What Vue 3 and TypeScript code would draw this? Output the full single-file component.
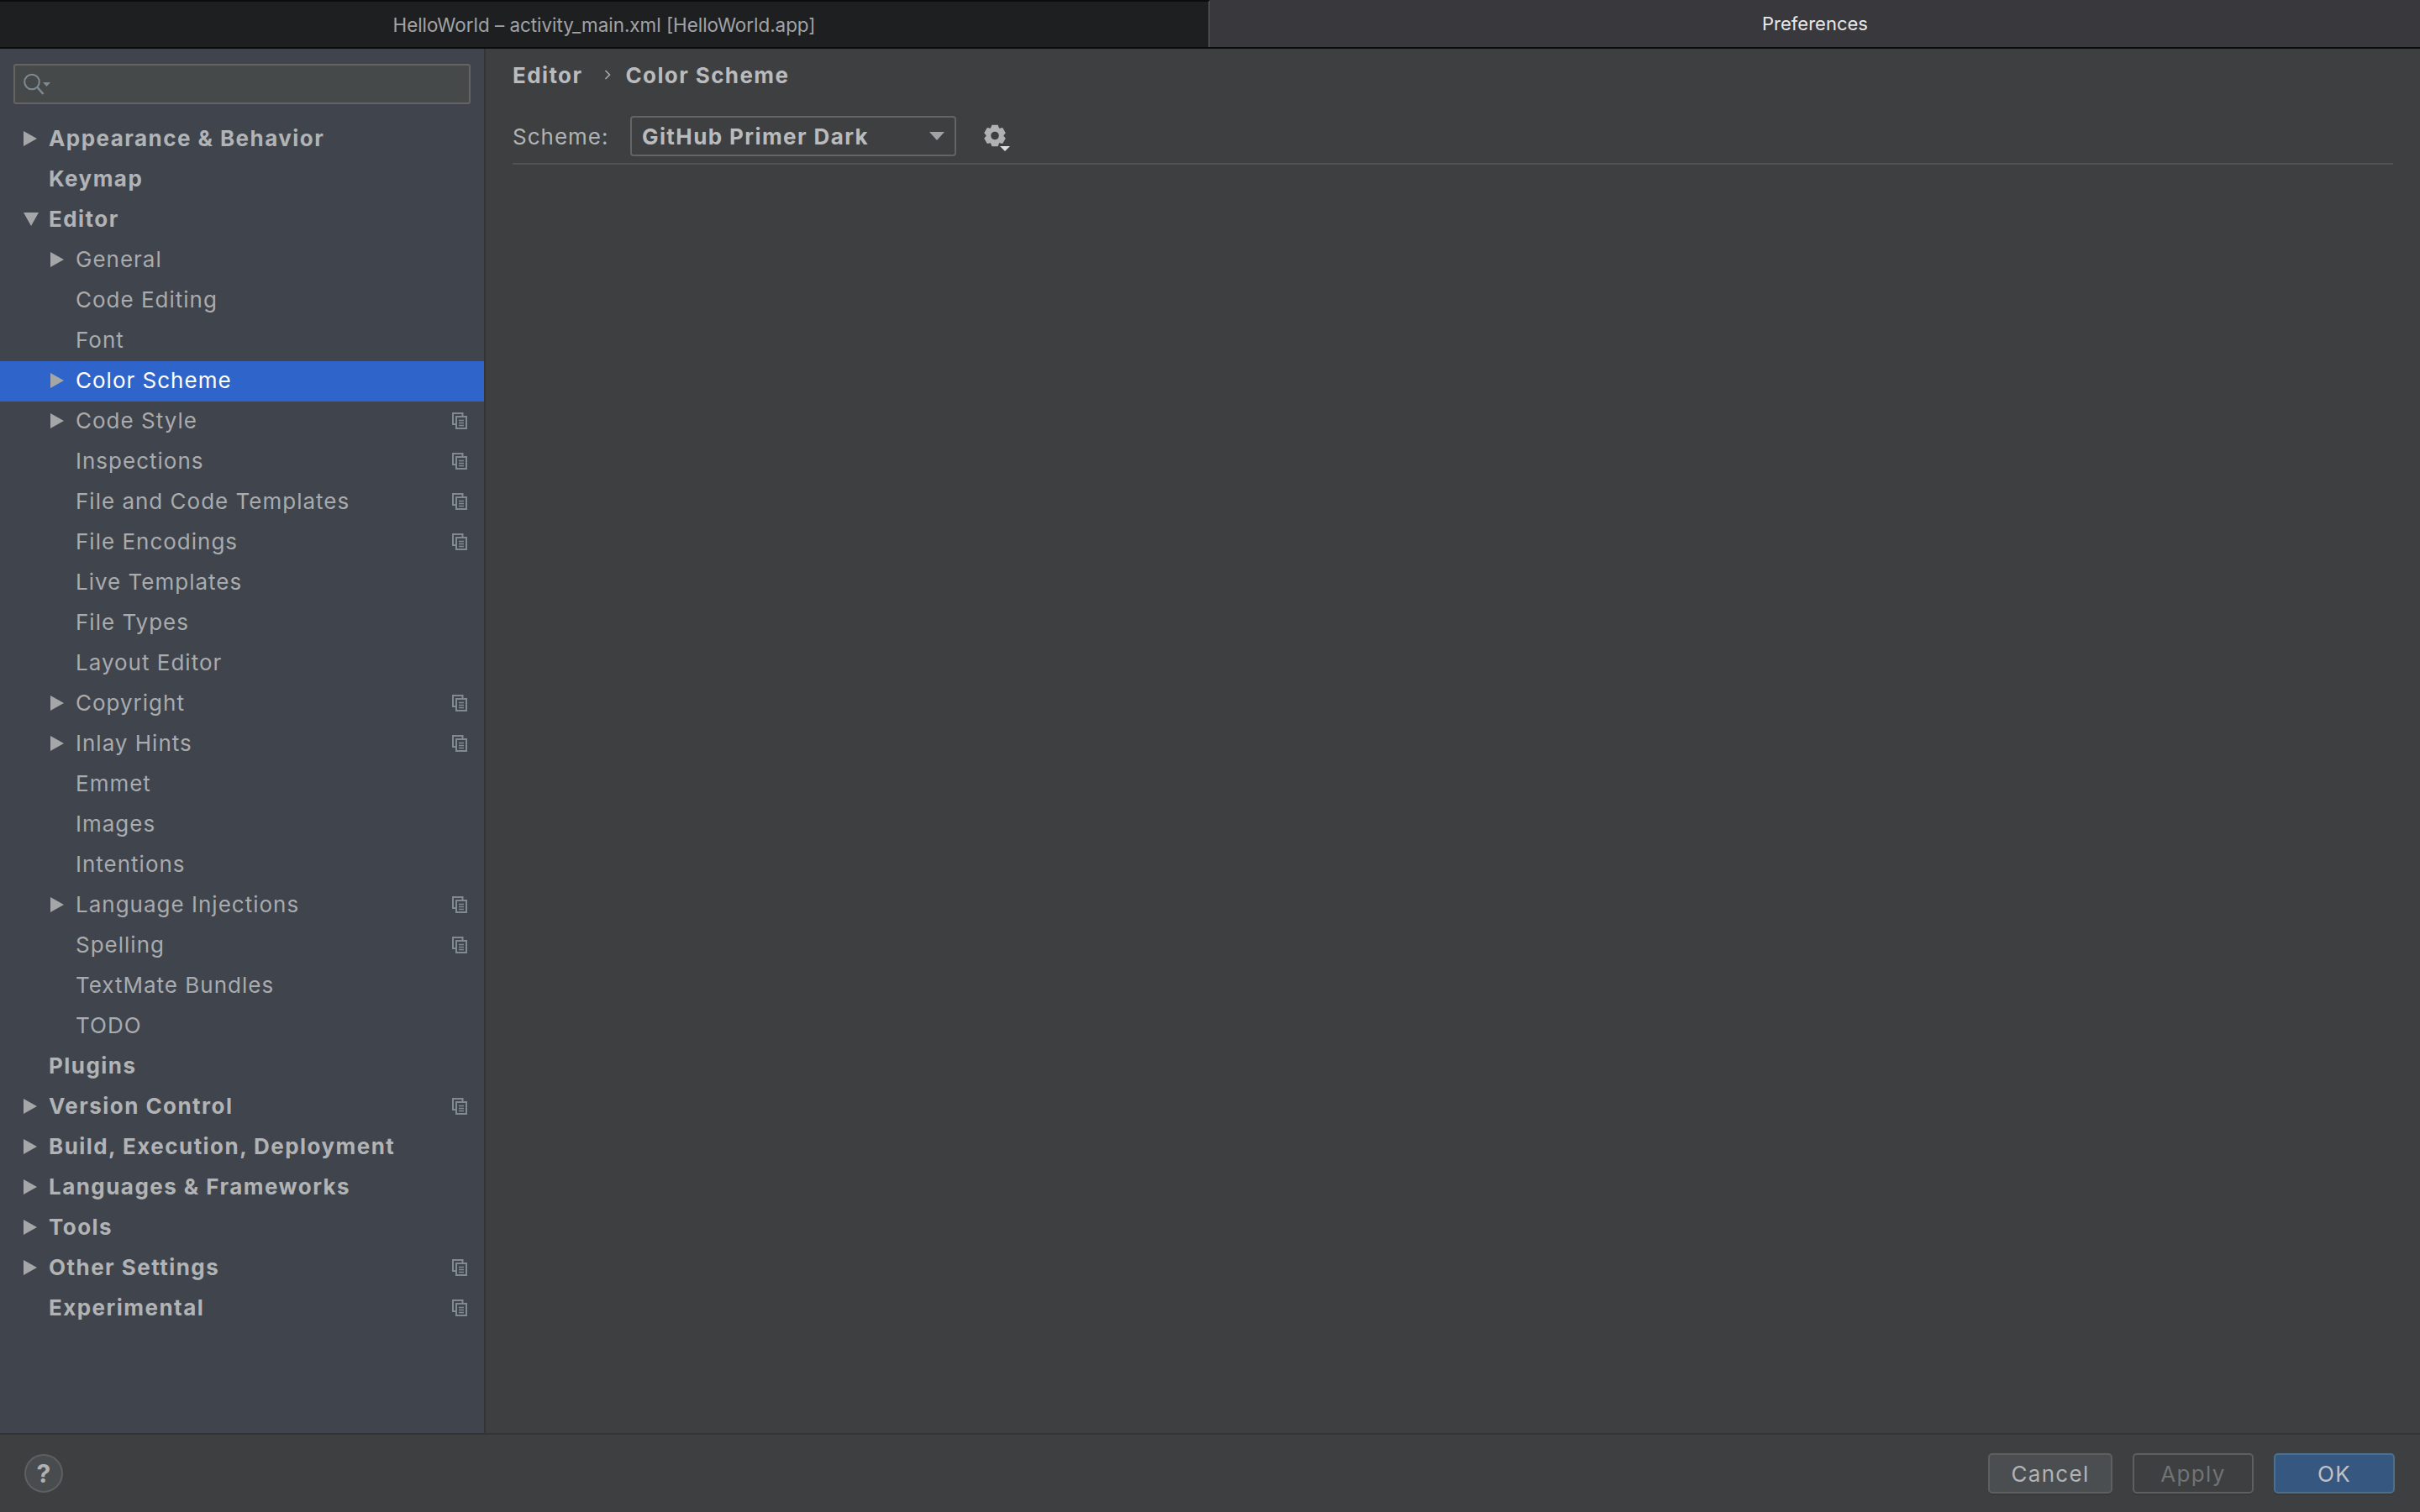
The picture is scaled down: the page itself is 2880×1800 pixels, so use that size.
<script setup lang="ts">
interface TreeRow {
  label: string
  level: 0 | 1
  arrow?: 'right' | 'down'
  copy?: boolean
  selected?: boolean
}

const rows: TreeRow[] = [
  { label: 'Appearance & Behavior', level: 0, arrow: 'right' },
  { label: 'Keymap', level: 0 },
  { label: 'Editor', level: 0, arrow: 'down' },
  { label: 'General', level: 1, arrow: 'right' },
  { label: 'Code Editing', level: 1 },
  { label: 'Font', level: 1 },
  { label: 'Color Scheme', level: 1, arrow: 'right', selected: true },
  { label: 'Code Style', level: 1, arrow: 'right', copy: true },
  { label: 'Inspections', level: 1, copy: true },
  { label: 'File and Code Templates', level: 1, copy: true },
  { label: 'File Encodings', level: 1, copy: true },
  { label: 'Live Templates', level: 1 },
  { label: 'File Types', level: 1 },
  { label: 'Layout Editor', level: 1 },
  { label: 'Copyright', level: 1, arrow: 'right', copy: true },
  { label: 'Inlay Hints', level: 1, arrow: 'right', copy: true },
  { label: 'Emmet', level: 1 },
  { label: 'Images', level: 1 },
  { label: 'Intentions', level: 1 },
  { label: 'Language Injections', level: 1, arrow: 'right', copy: true },
  { label: 'Spelling', level: 1, copy: true },
  { label: 'TextMate Bundles', level: 1 },
  { label: 'TODO', level: 1 },
  { label: 'Plugins', level: 0 },
  { label: 'Version Control', level: 0, arrow: 'right', copy: true },
  { label: 'Build, Execution, Deployment', level: 0, arrow: 'right' },
  { label: 'Languages & Frameworks', level: 0, arrow: 'right' },
  { label: 'Tools', level: 0, arrow: 'right' },
  { label: 'Other Settings', level: 0, arrow: 'right', copy: true },
  { label: 'Experimental', level: 0, copy: true }
]

// Six-toothed settings gear, centred on 0,0
const gearPath =
  [0, 60, 120, 180, 240, 300]
    .flatMap((tooth) => [
      [tooth - 30, 10.2],
      [tooth - 16, 13.2],
      [tooth + 16, 13.2],
      [tooth + 30, 10.2]
    ])
    .map(([deg, r], i) => {
      const rad = (deg * Math.PI) / 180
      const x = (r * Math.sin(rad)).toFixed(2)
      const y = (-r * Math.cos(rad)).toFixed(2)
      return `${i === 0 ? 'M' : 'L'}${x} ${y}`
    })
    .join('') + 'zM0 -4.800a4.800 4.800 0 1 0 0 9.600a4.800 4.800 0 1 0 0 -9.600z'
</script>

<template>
  <div class="window">
    <header class="tabs">
      <div class="tab">HelloWorld – activity_main.xml [HelloWorld.app]</div>
      <div class="tab active">Preferences</div>
    </header>

    <div class="body">
      <aside class="sidebar">
        <div class="search">
          <svg class="search-icon" width="32" height="28" viewBox="0 0 32 28">
            <circle cx="10" cy="11.5" r="8.800" fill="none" stroke="#7f8b91" stroke-width="2" />
            <path d="M16.500 18l7 8" stroke="#7f8b91" stroke-width="2.600" fill="none" />
            <path d="M23 12h9l-4.500 5z" fill="#7f8b91" />
          </svg>
        </div>

        <ul class="tree">
          <li
            v-for="row in rows"
            :key="row.label"
            class="row"
            :class="[`level-${row.level}`, { selected: row.selected }]"
          >
            <span class="arrow-slot">
              <svg v-if="row.arrow === 'right'" width="16" height="18" viewBox="0 0 16 18">
                <path d="M0 0l16 9L0 18z" fill="#a4a6a8" />
              </svg>
              <svg v-else-if="row.arrow === 'down'" width="18" height="16" viewBox="0 0 18 16">
                <path d="M0 0h18l-9 16z" fill="#a4a6a8" />
              </svg>
            </span>
            <span class="label">{{ row.label }}</span>
            <svg v-if="row.copy" class="copy" width="18" height="20" viewBox="0 0 18 20">
              <path d="M12.500 4V1H1v13h3.500" fill="none" stroke="#7f8b91" stroke-width="2" />
              <path d="M5 5h12v14H5z" fill="none" stroke="#7f8b91" stroke-width="2" />
              <path d="M8 9.500h6M8 12.500h6M8 15.500h6" stroke="#7f8b91" stroke-width="1.600" />
            </svg>
          </li>
        </ul>
      </aside>

      <main class="content">
        <div class="breadcrumb">
          <span>Editor</span>
          <svg class="crumb-sep" width="10" height="14" viewBox="0 0 10 14">
            <path d="M2.500 2l5 5-5 5" fill="none" stroke="#a9a9a9" stroke-width="1.600" />
          </svg>
          <span>Color Scheme</span>
        </div>

        <div class="scheme">
          <span class="scheme-label">Scheme:</span>
          <div class="combo">
            <span>GitHub Primer Dark</span>
            <svg width="18" height="10" viewBox="0 0 18 10"><path d="M0 0h18l-9 10z" fill="#a0a3a5" /></svg>
          </div>
          <svg class="gear" width="34" height="36" viewBox="0 0 34 36">
            <path transform="translate(14 17.500)" fill="#afb1b3" fill-rule="evenodd" :d="gearPath" />
            <path d="M20 30h12l-6 6z" fill="#dcdee0" />
          </svg>
        </div>
      </main>
    </div>

    <footer class="footer">
      <div class="help">?</div>
      <div class="actions">
        <button class="btn cancel">Cancel</button>
        <button class="btn apply">Apply</button>
        <button class="btn ok">OK</button>
      </div>
    </footer>
  </div>
</template>

<style>
html,
body {
  margin: 0;
  background: #3c3f41;
}
</style>

<style scoped>
.window {
  width: 2880px;
  height: 1800px;
  display: flex;
  flex-direction: column;
  background: #3d3f41;
  color: #b1b3b5;
  font-family: Inter, 'Liberation Sans', sans-serif;
  font-size: 26px;
  letter-spacing: 1px;
  overflow: hidden;
}

/* Tab strip */
.tabs {
  height: 58px;
  flex: none;
  display: grid;
  grid-template-columns: 1440px 1fr;
  box-sizing: border-box;
  border-bottom: 2px solid #0c0c0d;
  font-size: 22.4px;
  letter-spacing: 0;
}

.tab {
  display: flex;
  align-items: center;
  justify-content: center;
  background: #1e1f21;
  border-top: 2px solid #0c0c0d;
  border-right: 2px solid #4a4a4c;
  color: #a2a3a5;
}

.tab.active {
  background: #39393d;
  border: 0;
  color: #e8e8e9;
  font-size: 22px;
}

/* Main area */
.body {
  flex: 1;
  min-height: 0;
  display: flex;
}

.sidebar {
  width: 578px;
  flex: none;
  box-sizing: border-box;
  padding: 18px 0 0;
  background: #3f444d;
  border-right: 2px solid #323436;
}

.search {
  width: 544px;
  height: 48px;
  margin-left: 16px;
  box-sizing: border-box;
  display: flex;
  align-items: center;
  padding-left: 10px;
  background: #45494a;
  border: 2px solid #646464;
  border-radius: 3px;
}

.tree {
  list-style: none;
  margin: 18px 0 0;
  padding: 0;
}

.row {
  height: 48px;
  display: flex;
  align-items: center;
  box-sizing: border-box;
  padding-bottom: 2px;
}

.arrow-slot {
  width: 30px;
  flex: none;
  display: flex;
  align-items: center;
}

.level-0 {
  padding-left: 28px;
  font-weight: 700;
  letter-spacing: 1.45px;
}

.level-1 {
  padding-left: 60px;
  color: #a9abad;
}

.selected {
  background: #2f65ca;
  color: #fff;
}

.label {
  flex: 1;
  padding-bottom: 1px;
}

.copy {
  margin-right: 20px;
  flex: none;
}

/* Right pane */
.content {
  flex: 1;
  padding: 0 32px;
}

.breadcrumb {
  height: 62px;
  display: flex;
  align-items: center;
  gap: 18px;
  font-weight: 700;
  letter-spacing: 1.4px;
  color: #b9bbbd;
}

.crumb-sep {
  margin: 0 -2px 0 7px;
}

.scheme {
  display: flex;
  align-items: center;
  padding: 18px 0 8px;
  border-bottom: 2px solid #505254;
}

.scheme-label {
  width: 140px;
  flex: none;
}

.combo {
  width: 388px;
  height: 48px;
  flex: none;
  box-sizing: border-box;
  display: flex;
  align-items: center;
  justify-content: space-between;
  padding: 0 12px;
  border: 2px solid #646464;
  border-radius: 4px;
  font-weight: 700;
  letter-spacing: 1.4px;
  color: #b9bbbd;
}

.gear {
  margin-left: 32px;
}

/* Footer */
.footer {
  height: 94px;
  flex: none;
  box-sizing: border-box;
  display: flex;
  align-items: center;
  justify-content: space-between;
  padding: 0 30px 0 29px;
  border-top: 2px solid #323436;
}

.help {
  width: 46px;
  height: 46px;
  box-sizing: border-box;
  display: flex;
  align-items: center;
  justify-content: center;
  border: 2px solid #5e6060;
  border-radius: 50%;
  background: #484c4e;
  color: #afb1b3;
  font-size: 30px;
  font-weight: 700;
  letter-spacing: 0;
}

.actions {
  display: flex;
  gap: 24px;
}

.btn {
  height: 48px;
  box-sizing: border-box;
  padding: 0;
  font: inherit;
  letter-spacing: 1.3px;
  border-radius: 5px;
  border: 2px solid #5e6060;
  box-shadow: 0 2px 0 #37393b;
}

.cancel {
  width: 148px;
  background: #4b4e50;
  color: #b1b3b5;
}

.apply {
  width: 144px;
  background: #3d3f41;
  color: #717375;
}

.ok {
  width: 144px;
  background: #365880;
  border-color: #4c708c;
  color: #bdc2c7;
}
</style>
